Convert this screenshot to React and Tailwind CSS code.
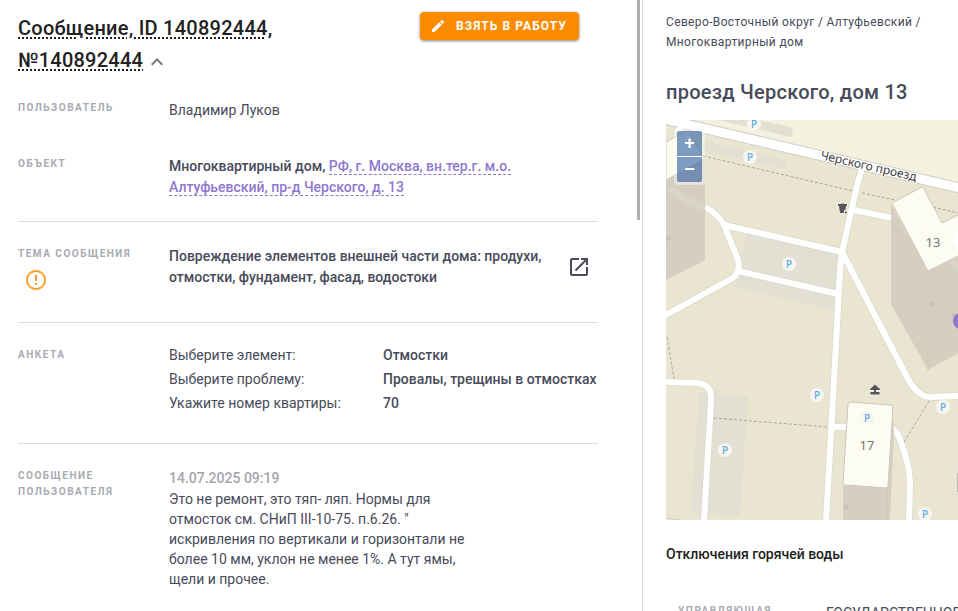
import { useState } from "react";
import { MdEdit, MdErrorOutline, MdKeyboardArrowUp, MdOpenInNew } from "react-icons/md";

const answers = [
  { q: "Выберите элемент:", a: "Отмостки" },
  { q: "Выберите проблему:", a: "Провалы, трещины в отмостках" },
  { q: "Укажите номер квартиры:", a: "70" },
];

// roads: casing is drawn first, then the white fill on top
const roads = [
  "M39 87C48 92 54 97 58 105L72 140C74 150 72 155 65 159L-2 196",
  "M58 105L176 132",
  "M72 151L172 174",
  "M196 48L190 70L176 132L174 150L168 260L160 402",
  "M176 132L242 259C250 273 257 277 264 277L294 276",
  "M188 90L226 98",
  "M0 262L32 263C41 264 46 270 45 280L38 402",
  "M166 307L182 307",
  "M224 308C230 309 233 316 235 322C240 336 244 350 244 363L243 402",
];

const paths = [
  "M37 36L187 71",
  "M196 73L229 80",
  "M267 87L292 93",
  "M1 217L8 259",
  "M48 298L162 307",
  "M263 281L238 322",
];

const parkings = [
  [88, 4],
  [84, 37],
  [123, 144],
  [151, 275],
  [201, 298],
  [277, 287],
  [59, 330],
  [259, 394],
];

const parkingLots = [
  "52,0 60,-8 127,8 125,17",
  "38,21 120,40 118,49 38,31",
  "81,114 174,133 169,190 68,167",
  "33,273 82,277 74,396 25,393",
];

function MapCanvas() {
  return (
    <svg
      viewBox="0 0 292 400"
      preserveAspectRatio="xMinYMin slice"
      className="block h-full w-full"
      role="img"
      aria-label="Карта"
    >
      <rect width="292" height="400" fill="#eae5d1" />
      <path d="M0 0H292V67L0 0Z" fill="#f4f1df" />
      {parkingLots.map((p) => (
        <polygon key={p} points={p} fill="#e1e0d2" />
      ))}
      <g fill="none" strokeLinejoin="round">
        <path d="M-2 -1L294 68" stroke="#d0cdc6" strokeWidth="11" />
        {roads.map((d) => (
          <path key={d} d={d} stroke="#dcd8cf" strokeWidth="7.5" />
        ))}
        <path d="M-2 -1L294 68" stroke="#fff" strokeWidth="9" />
        <path d="M12 12L18 0" stroke="#fff" strokeWidth="6" />
        {roads.map((d) => (
          <path key={d} d={d} stroke="#fff" strokeWidth="6" />
        ))}
        {paths.map((d) => (
          <path key={d} d={d} stroke="#aaa894" strokeWidth="1" strokeDasharray="3 2" />
        ))}
      </g>

      {/* дом слева */}
      <path d="M0 60L39 39V140L0 160Z" fill="#d5cec1" />
      <path d="M4 68Q12 77 39 88" stroke="#dad5cb" strokeWidth="6" fill="none" />
      <path d="M0 22L22 10L38 39L0 60Z" fill="#fcfcf2" stroke="#cfc6b8" strokeWidth="1" />
      <circle cx="2" cy="118" r="2.5" fill="#c8c1b5" />

      {/* дом 13 */}
      <path d="M225 84L262 151L292 136V233L262 250L225 184Z" fill="#d5cec1" />
      <path d="M262 151V250" stroke="#cec7ba" strokeWidth="1" />
      <path d="M225 103Q232 110 238 114M275 147Q278 160 292 161" stroke="#cbc5b8" strokeDasharray="3 2" fill="none" />
      <path d="M286 141L293 150" stroke="#dbd6cc" strokeWidth="5" />
      <path
        d="M256 67L226 83L262 151L294 135V94L276 103L258 69Z"
        fill="#fcfcf2"
        stroke="#cfc6b8"
        strokeWidth="1"
      />
      <circle cx="266" cy="184" r="2.5" fill="#c8c1b5" />
      <circle cx="288" cy="195" r="2.5" fill="#c8c1b5" />
      <circle cx="295" cy="119" r="7" fill="#fff" />
      <circle cx="295" cy="201" r="8" fill="#8f78cf" />

      {/* дом 17 */}
      <path d="M177 365L226 285L228 312L224 400H177Z" fill="#d5cec1" />
      <path d="M221 366V400" stroke="#cbc4b7" strokeWidth="1" />
      <path
        d="M184 282L225 285Q227 285 227 287L222 366Q222 368 220 368L179 365Q177 365 177 363L182 284Q182 282 184 282Z"
        fill="#fcfcf2"
        stroke="#cfc6b8"
        strokeWidth="1"
      />
      <circle cx="180" cy="387" r="2.5" fill="#c8c1b5" />
      <path d="M0 398L14 400" stroke="#d0cdc6" strokeWidth="1" />
      <path d="M292 353V372" stroke="#b9b4ab" strokeWidth="2" />

      {/* урна и беседка */}
      <g fill="#55555a" stroke="#f8f5ea" strokeWidth="1.4" paintOrder="stroke">
        <path d="M172 84H175V83.4H178V84H181V86H180L179.6 90H178V93H174L173 86H172Z" />
        <circle cx="180" cy="92.5" r="1.1" />
        <path d="M209 264.5L214 269V270H210V272H213.6V274.6H204.4V272H208V270H204V269Z" />
      </g>

      {parkings.map(([x, y]) => (
        <g key={`${x}-${y}`}>
          <circle cx={x} cy={y} r="7" fill="#f7f5ef" />
          <text
            x={x}
            y={y + 4}
            textAnchor="middle"
            className="fill-[#55a9e8] font-['Noto_Sans',sans-serif] text-[10px] font-medium"
          >
            P
          </text>
        </g>
      ))}
      <g className="fill-[#77766f] font-['Noto_Sans',sans-serif] text-[13px]">
        <text x="267" y="127" textAnchor="middle">
          13
        </text>
        <text x="201" y="330" textAnchor="middle">
          17
        </text>
      </g>
      <text
        transform="translate(154 39) rotate(13)"
        stroke="#fff"
        strokeWidth="2"
        paintOrder="stroke"
        className="fill-[#3d3d3d] font-['Noto_Sans',sans-serif] text-[12px]"
      >
        Черского проезд
      </text>
    </svg>
  );
}

function Label({ children }) {
  return (
    <div className="text-[10px] leading-4 font-bold tracking-[0.15em] text-[#a8aab2] uppercase">
      {children}
    </div>
  );
}

function Row({ label, icon, line = true, className = "pb-6", children }) {
  return (
    <section
      className={`grid grid-cols-[151px_1fr] pt-6 ${line ? "border-b border-[#dedede]" : ""} ${className}`}
    >
      <div>
        <Label>{label}</Label>
        {icon}
      </div>
      <div>{children}</div>
    </section>
  );
}

export default function App() {
  const [open, setOpen] = useState(true);
  const [taken, setTaken] = useState(false);

  return (
    <div className="flex h-screen overflow-hidden bg-white font-[Roboto,sans-serif] text-sm leading-[21px] text-[#474b5a]">
      <main className="relative min-w-0 flex-1 overflow-hidden border-r border-[#dcdcdf] pr-11 pl-[18px]">
        <header className="flex items-start justify-between gap-4 pt-3 pr-[19px]">
          <h1 className="w-72 text-xl leading-8 font-medium tracking-[0.0125em] text-[#212121]">
            <span className="underline decoration-dotted decoration-2 underline-offset-2">
              Сообщение, ID 140892444, №140892444
            </span>
            <button
              aria-label="Свернуть"
              aria-expanded={open}
              onClick={() => setOpen(!open)}
              className="ml-0.5 inline-block align-middle text-[#757575]"
            >
              <MdKeyboardArrowUp className="size-6" />
            </button>
          </h1>
          <button
            aria-pressed={taken}
            onClick={() => setTaken(!taken)}
            className="flex h-7 shrink-0 items-center gap-2.5 rounded bg-[#fb8c00] pr-3 pl-2.5 text-xs font-bold tracking-[0.09em] text-white uppercase shadow-[0_1px_3px_rgba(0,0,0,0.5)]"
          >
            <MdEdit className="size-4" />
            Взять в работу
          </button>
        </header>

        <Row label="Пользователь" line={false} className="pb-[11px]">
          Владимир Луков
        </Row>

        <Row label="Объект" className="pb-[23px]">
          <div className="max-w-[360px] font-medium">
            Многоквартирный дом,{" "}
            <a href="#object" className="border-b border-dashed border-[#8f78cf] text-[#8f78cf]">
              РФ, г. Москва, вн.тер.г. м.о. Алтуфьевский, пр-д Черского, д. 13
            </a>
          </div>
        </Row>

        <Row
          label="Тема сообщения"
          icon={<MdErrorOutline className="mt-1.5 ml-1.5 size-6 text-[#ff9d33]" />}
          className="pb-[30px]"
        >
          <div className="flex items-start justify-between">
            <p className="max-w-[380px] font-medium">
              Повреждение элементов внешней части дома: продухи, отмостки, фундамент, фасад, водостоки
            </p>
            <button aria-label="Открыть" className="mr-[7px] self-center">
              <MdOpenInNew className="size-6" />
            </button>
          </div>
        </Row>

        <Row label="Анкета" className="pb-7">
          <table className="-mt-1 w-full leading-6">
            <tbody>
              {answers.map((item) => (
                <tr key={item.q}>
                  <th scope="row" className="w-[214px] p-0 text-left font-normal">
                    {item.q}
                  </th>
                  <td className="p-0 font-medium">{item.a}</td>
                </tr>
              ))}
            </tbody>
          </table>
        </Row>

        <Row
          label={
            <>
              Сообщение
              <br />
              пользователя
            </>
          }
          line={false}
        >
          <time className="block font-medium text-[#a3a5ae]">14.07.2025 09:19</time>
          <p className="max-w-[300px] leading-5">
            Это не ремонт, это тяп- ляп. Нормы для отмосток см. СНиП III-10-75. п.6.26. " искривления по
            вертикали и горизонтали не более 10 мм, уклон не менее 1%. А тут ямы, щели и прочее.
          </p>
        </Row>

        {/* ползунок прокрутки */}
        <div className="absolute top-0 right-0.5 h-[220px] w-[3px] bg-[#aeaeb4]" />
      </main>

      <aside className="w-[315px] shrink-0 overflow-hidden pl-[23px]">
        <nav className="pt-3 text-xs leading-5 tracking-[0.03em]">
          Северо-Восточный округ / Алтуфьевский / Многоквартирный дом
        </nav>
        <h2 className="mt-6 text-xl leading-8 font-medium tracking-[0.0125em]">проезд Черского, дом 13</h2>

        <div className="relative mt-3 h-[400px] overflow-hidden">
          <MapCanvas />
          <div className="absolute top-2 left-2 flex flex-col gap-px rounded bg-white/40 p-[3px] font-['Liberation_Sans',sans-serif] text-lg font-bold text-white">
            <button aria-label="Приблизить" className="flex size-[25px] items-center justify-center rounded-t-xs bg-[#003c88]/50 pb-0.5">
              +
            </button>
            <button aria-label="Отдалить" className="flex size-[25px] items-center justify-center rounded-b-xs bg-[#003c88]/50 pb-0.5">
              −
            </button>
          </div>
        </div>

        <h3 className="mt-6 font-medium text-[#212121]">Отключения горячей воды</h3>
        <div className="mt-[38px] grid grid-cols-[148px_1fr] pl-3 whitespace-nowrap">
          <Label>Управляющая</Label>
          <div>ГОСУДАРСТВЕННОЕ</div>
        </div>
      </aside>
    </div>
  );
}
